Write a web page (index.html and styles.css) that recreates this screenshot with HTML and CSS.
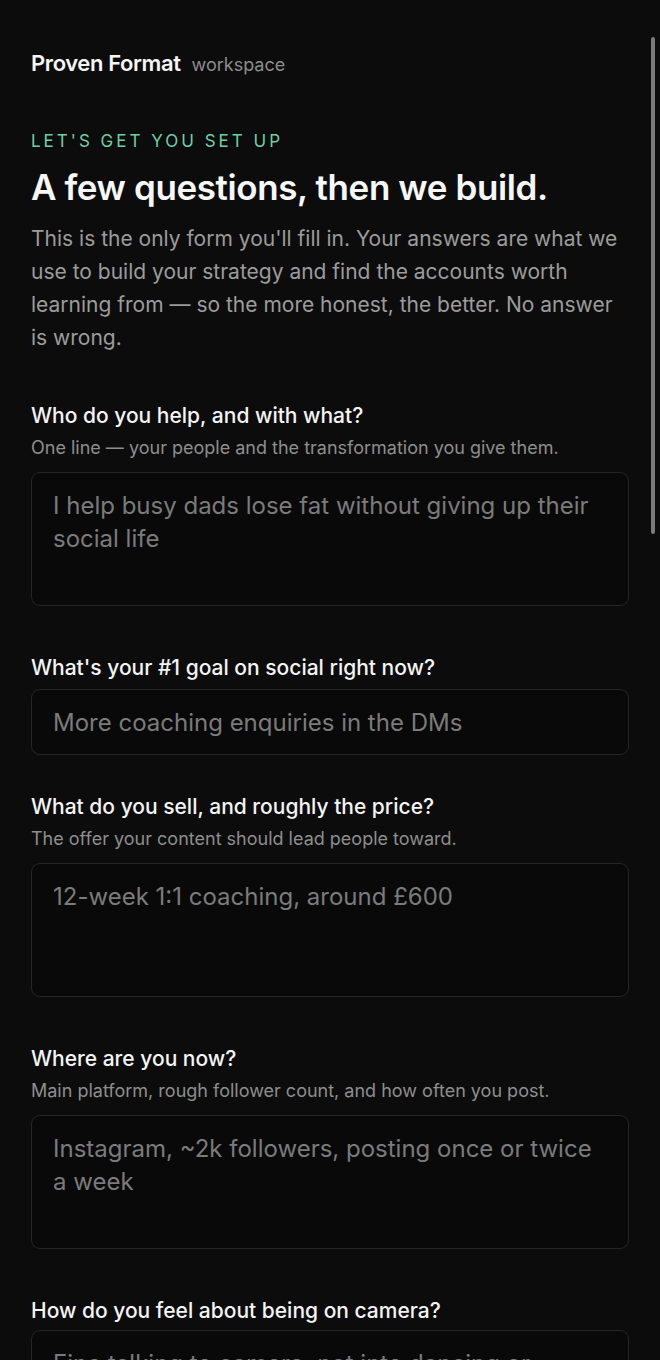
FILE: index.html
```html
<!DOCTYPE html>
<html lang="en">
<head>
<meta charset="utf-8">
<title>Proven Format — workspace</title>
<link rel="stylesheet" href="styles.css">
</head>
<body>
<div class="page">
  <header class="brand">
    <span class="brand-name">Proven Format</span>
    <span class="brand-sub">workspace</span>
  </header>

  <section class="intro">
    <p class="eyebrow">LET'S GET YOU SET UP</p>
    <h1 class="title">A few questions, then we build.</h1>
    <p class="lead">This is the only form you'll fill in. Your answers are what we use to build your strategy and find the accounts worth learning from — so the more honest, the better. No answer is wrong.</p>
  </section>

  <form class="form">
    <div class="field field-area">
      <label class="label" for="q1">Who do you help, and with what?</label>
      <p class="hint">One line — your people and the transformation you give them.</p>
      <textarea id="q1" class="box area" placeholder="I help busy dads lose fat without giving up their social life"></textarea>
    </div>

    <div class="field">
      <label class="label" for="q2">What's your #1 goal on social right now?</label>
      <input id="q2" class="box line" type="text" placeholder="More coaching enquiries in the DMs">
    </div>

    <div class="field field-area">
      <label class="label" for="q3">What do you sell, and roughly the price?</label>
      <p class="hint">The offer your content should lead people toward.</p>
      <textarea id="q3" class="box area" placeholder="12-week 1:1 coaching, around £600"></textarea>
    </div>

    <div class="field field-area">
      <label class="label" for="q4">Where are you now?</label>
      <p class="hint">Main platform, rough follower count, and how often you post.</p>
      <textarea id="q4" class="box area" placeholder="Instagram, ~2k followers, posting once or twice a week"></textarea>
    </div>

    <div class="field field-area">
      <label class="label" for="q5">How do you feel about being on camera?</label>
      <textarea id="q5" class="box area" placeholder="Fine talking to camera, not into dancing or trends"></textarea>
    </div>
  </form>
</div>
<div class="scroll-thumb" aria-hidden="true"></div>
</body>
</html>
```

FILE: styles.css
```css
html {
  scrollbar-width: none;
  background: #0c0c0c;
}
html::-webkit-scrollbar {
  display: none;
}
body {
  margin: 0;
  background: #0c0c0c;
  color: #f2f2f2;
  font-family: Inter, "Liberation Sans", sans-serif;
}
.page {
  padding: 49px 31px 40px;
}
.brand {
  display: flex;
  align-items: baseline;
  gap: 11px;
  line-height: 28px;
}
.brand-name {
  font-size: 22px;
  font-weight: 600;
  letter-spacing: -0.4px;
  color: #f5f5f5;
}
.brand-sub {
  font-size: 18px;
  color: #8d8d8d;
}
.intro {
  margin-top: 50px;
}
.eyebrow {
  margin: 0;
  font-size: 17px;
  line-height: 24px;
  letter-spacing: 3px;
  color: #6fcfa5;
}
.title {
  margin: 15px 0 0;
  font-size: 35px;
  line-height: 38px;
  font-weight: 600;
  letter-spacing: -0.4px;
  color: #f7f7f7;
}
.lead {
  margin: 16px 0 0;
  font-size: 21px;
  line-height: 33px;
  color: #9c9c9c;
}
.form {
  margin-top: 49px;
  display: flex;
  flex-direction: column;
}
.field {
  display: flex;
  flex-direction: column;
  margin-bottom: 39px;
}
.field-area {
  margin-bottom: 49px;
}
.label {
  font-size: 21px;
  line-height: 26px;
  font-weight: 500;
  color: #f4f4f4;
  margin-bottom: 8px;
}
.field-area .label {
  margin-bottom: 6px;
}
.hint {
  margin: 0 0 11px;
  font-size: 18px;
  line-height: 26px;
  color: #8e8e8e;
}
.box {
  display: block;
  box-sizing: border-box;
  width: 100%;
  background: #090909;
  border: 1px solid #252525;
  border-radius: 9px;
  color: #e6e6e6;
  font-family: Inter, "Liberation Sans", sans-serif;
  font-size: 24px;
  outline: none;
  margin: 0;
}
.box::placeholder {
  color: #7b7b7b;
  opacity: 1;
}
.area {
  height: 134px;
  padding: 16px 21px;
  line-height: 33px;
  resize: none;
  overflow: hidden;
}
.line {
  height: 66px;
  padding: 0 21px;
  line-height: 33px;
}
.scroll-thumb {
  position: fixed;
  top: 37px;
  left: 651px;
  width: 4px;
  height: 497px;
  border-radius: 2px;
  background: #7a7a7a;
}
```
